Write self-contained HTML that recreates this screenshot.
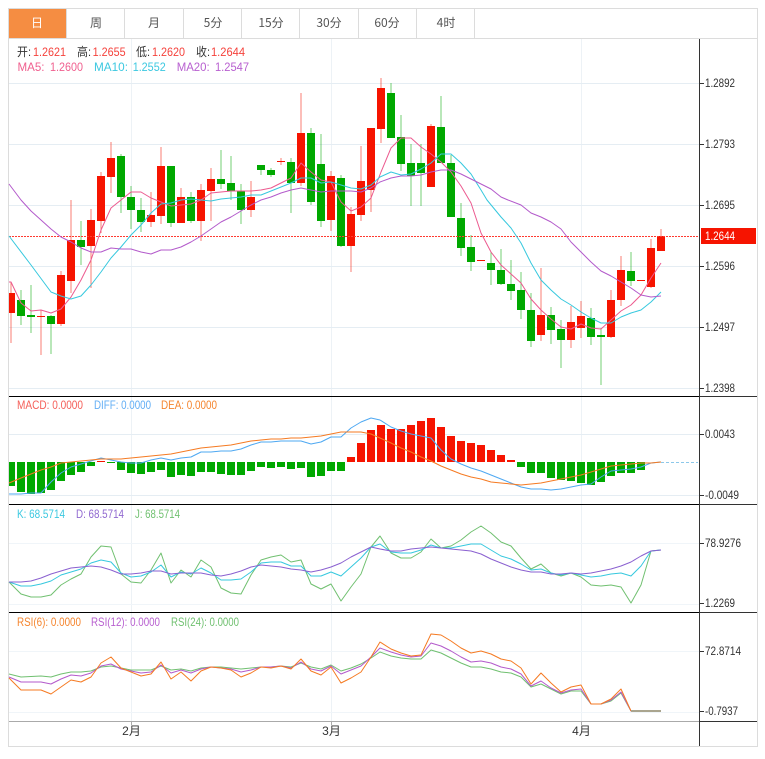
<!DOCTYPE html>
<html>
<head>
<meta charset="utf-8">
<style>
html,body{margin:0;padding:0;background:#fff;width:765px;height:759px;overflow:hidden}
svg{display:block}
text{font-family:"Liberation Sans","Noto Sans CJK SC",sans-serif;font-size:12px}
.t text{font-family:"Noto Sans CJK SC","Liberation Sans",sans-serif;font-size:12px;fill:#555;text-anchor:middle}
.a text{fill:#333;font-size:12px}
.c{shape-rendering:crispEdges}
polyline{fill:none;stroke-width:1;stroke-linejoin:round}
</style>
</head>
<body>
<svg width="765" height="759" viewBox="0 0 765 759" xmlns="http://www.w3.org/2000/svg">
<defs><clipPath id="cp"><rect x="9" y="39" width="690" height="682"/></clipPath></defs>
<!-- frame and tabs -->
<g class="c">
<rect x="9" y="9" width="57" height="29" fill="#f58d42"/>
<path d="M8.5 8.5H757.5V746.5H8.5ZM9 38.5H757M66.5 9V38M124.5 9V38M183.5 9V38M241.5 9V38M299.5 9V38M358.5 9V38M416.5 9V38M474.5 9V38" fill="none" stroke="#dcdcdc"/>
<!-- grid -->
<path d="M131.5 39V721M331.5 39V721M581.5 39V721" stroke="#edf2f6" fill="none"/>
<path d="M9 83.5H699M9 144.5H699M9 205.5H699M9 266.5H699M9 327.5H699M9 388.5H699M9 434.5H699M9 495.5H699" stroke="#e5edf3" fill="none"/>
<path d="M9 543.5H699M9 604.5H699M9 651.5H699M9 712.5H699" stroke="#f0f5f9" fill="none"/>
<path d="M9 396.5H699M9 504.5H699M9 612.5H699" stroke="#000" fill="none"/>
<path d="M9 721.5H699M131.5 721V725M331.5 721V725M581.5 721V725" stroke="#aaa" fill="none"/>
<path d="M699.5 39V746M699 396.5H757M699 504.5H757M699 612.5H757M699 721.5H757" stroke="#333" fill="none"/>
<path d="M700 83.5H704M700 144.5H704M700 205.5H704M700 266.5H704M700 327.5H704M700 388.5H704M700 434.5H704M700 495.5H704M700 543.5H704M700 603.5H704M700 651.5H704M700 711.5H704" stroke="#333" fill="none"/>
</g>
<!-- tabs text -->
<g class="t">
<text x="37" y="27" style="fill:#fff">日</text>
<text x="96" y="27">周</text>
<text x="154" y="27">月</text>
<text x="213" y="27">5分</text>
<text x="271" y="27">15分</text>
<text x="329" y="27">30分</text>
<text x="387" y="27">60分</text>
<text x="446" y="27">4时</text>
</g>
<!-- candles -->
<g clip-path="url(#cp)">
<path fill="none" stroke="#f61400" stroke-opacity=".55" d="M11 282V343M41 310V355M61 271V326M71 200V293M91 209V288M101 172V233M111 142V193M151 192V227M161 147V224M181 188V223M201 184V241M211 168V221M251 181V217M281 158V165M301 93V186M331 171V231M351 207V272M361 146V221M371 128V212M381 78V143M431 124V187M541 268V341M571 306V348M581 301V338M611 290V338M621 256V306M651 239V288M661 229V251"/>
<path fill="none" stroke="#00a800" stroke-opacity=".55" d="M21 290V325M31 285V333M51 315V354M81 221V265M121 154V213M131 186V229M141 198V232M171 166V227M191 192V223M221 150V189M231 156V200M241 184V224M261 165V175M271 168V177M291 158V213M311 128V205M321 134V227M341 175V247M391 83V138M401 115V171M411 144V206M421 144V206M441 96V163M451 155V217M461 203V256M471 235V271M491 252V285M501 249V285M511 260V300M521 272V319M531 293V347M551 307V344M561 320V368M591 308V345M601 328V385M631 252V286"/>
<path class="c" fill="none" stroke="#f61400" stroke-width="8" d="M11 293V313M41 316V317M61 275V324M71 240V281M91 220V246M101 176V221M111 158V177M151 215V222M161 166V216M181 197V223M201 190V221M211 179V191M251 197V210M281 161V162M301 133V183M331 176V220M351 214V246M361 181V215M371 128V190M381 88V129M431 126V187M481 260V261M541 315V335M571 322V340M581 316V328M611 300V337M621 270V300M641 280V281M651 248V287M661 236V251"/>
<path class="c" fill="none" stroke="#00a800" stroke-width="8" d="M21 300V316M31 315V317M51 316V324M81 240V247M121 156V197M131 197V210M141 210V222M171 166V223M191 197V221M221 179V184M231 183V191M241 191V210M261 165V170M271 170V175M291 162V183M311 133V202M321 164V221M341 178V246M391 93V138M401 137V164M411 163V176M421 163V173M441 127V163M451 163V217M461 218V248M471 247V262M491 263V270M501 270V284M511 284V291M521 290V310M531 310V341M551 315V330M561 329V340M591 318V337M601 335V337M631 271V281"/>
<!-- price line -->
<path class="c" d="M9 236.5H699" stroke="#ff3a30" stroke-dasharray="2 1" fill="none"/>
<!-- MACD bars -->
<path class="c" fill="none" stroke="#f61400" stroke-width="8" d="M101 461V462M351 457V462M361 443V462M371 430V462M381 425V462M391 429V462M401 429V462M411 425V462M421 421V462M431 418V462M441 427V462M451 436V462M461 441V462M471 443V462M481 445V462M491 450V462M501 455V462M511 460V462"/>
<path class="c" fill="none" stroke="#00a800" stroke-width="8" d="M11 462V486M21 462V492M31 462V494M41 462V493M51 462V490M61 462V481M71 462V475M81 462V472M91 462V466M111 462V463M121 462V470M131 462V473M141 462V474M151 462V472M161 462V470M171 462V477M181 462V475M191 462V476M201 462V472M211 462V472M221 462V474M231 462V475M241 462V475M251 462V471M261 462V467M271 462V468M281 462V467M291 462V469M301 462V468M311 462V477M321 462V476M331 462V471M341 462V471M521 462V467M531 462V473M541 462V473M551 462V478M561 462V480M571 462V481M581 462V483M591 462V485M601 462V482M611 462V476M621 462V473M631 462V473M641 462V470"/>
</g>
<!-- MA lines -->
<polyline stroke="#ec5a8f" points="9,282 11,282 21,303 31,311 41,310 51,313 61,309 71,297 81,280 91,260 101,230 111,208 121,200 131,192 141,192 151,198 161,202 171,206 181,205 191,204 201,200 211,193 221,192 231,191 241,191 251,191 261,190 271,188 281,183 291,178 301,163 311,172 321,180 331,182 341,202 351,211 361,207 371,198 381,172 391,148 401,138 411,138 421,147 431,154 441,162 451,172 461,186 471,203 481,233 491,252 501,265 511,274 521,283 531,299 541,310 551,319 561,327 571,329 581,324 591,328 601,329 611,320 621,311 631,305 641,295 651,278 661,263"/>
<polyline stroke="#36c8de" points="9,236 31,265 51,292 61,296 71,299 81,296 91,285 101,272 111,258 121,247 131,235 141,225 151,213 161,204 171,203 181,200 191,199 201,200 211,201 221,199 231,198 241,197 251,195 261,195 271,191 281,187 291,183 301,178 311,178 321,183 331,182 341,185 351,188 361,189 371,185 380,177 391,172 401,175 411,174 421,169 431,163 441,154 451,154 461,163 471,174 481,190 487,200 501,217 511,228 521,243 531,263 541,280 551,290 561,299 571,305 581,312 591,318 601,323 611,323 621,317 631,313 641,310 651,302 661,292"/>
<polyline stroke="#b35acb" points="9,184 21,200 31,211 41,220 51,229 61,237 71,242 81,248 91,252 101,252 111,248 121,249 131,249 141,252 151,254 161,250 171,250 181,247 191,242 201,236 211,229 221,222 231,217 241,211 251,205 261,200 271,197 281,193 291,190 301,188 311,190 321,192 331,191 341,191 351,191 361,192 371,188 380,182 391,178 401,176 411,176 421,175 431,172 441,170 451,170 461,174 471,179 481,184 491,189 501,197 508,200 521,205 531,213 541,217 551,222 561,229 571,242 581,252 591,262 601,271 611,276 621,282 631,288 641,295 651,297 661,296"/>
<path d="M661 462.5H698" stroke="#8cc8ea" stroke-dasharray="3 2" fill="none"/>
<polyline stroke="#4ea8f2" points="9,494 21,494 31,493 41,493 51,482 61,473 71,467 81,464 91,461 101,458 111,460 121,462 131,463 141,463 151,460 161,458 171,460 181,458 191,457 201,452 211,452 221,451 231,451 241,449 251,445 261,442 271,442 281,441 291,441 301,441 311,444 321,442 331,437 341,437 351,428 361,422 371,418 380,420 391,427 401,431 411,434 421,436 431,438 441,450 451,459 461,464 471,468 481,471 491,475 501,479 511,483 521,487 531,489 541,489 551,490 561,489 571,487 581,485 591,484 601,477 611,471 621,470 631,469 641,467 651,463 661,462"/>
<polyline stroke="#f57a22" points="9,483 21,478 31,474 41,470 51,467 61,463 71,462 81,461 91,460 101,459 111,459 121,459 131,458 141,457 151,456 161,455 171,454 181,452 191,450 201,448 211,447 221,446 231,445 241,443 251,441 261,440 271,439 281,439 291,438 301,438 311,437 321,436 331,434 341,432 351,432 361,432 371,434 380,438 391,443 401,448 411,452 421,457 431,461 441,466 451,470 461,474 471,477 481,479 491,482 501,483 511,484 521,485 531,484 541,483 551,481 561,479 571,477 581,475 591,472 601,469 611,466 621,465 631,464 641,463 651,463 661,462"/>
<!-- KDJ -->
<polyline stroke="#70c070" points="9,582 21,594 31,597 41,597 51,595 61,585 71,579 81,574 91,557 101,546 111,547 121,574 131,582 141,583 151,570 161,553 171,583 181,570 191,577 201,560 211,567 221,588 231,593 241,594 251,575 261,560 271,557 281,555 291,562 301,560 311,584 321,589 331,584 341,601 351,587 361,574 371,547 380,536 391,553 401,558 411,558 421,552 431,539 441,548 451,546 461,540 471,532 481,526 491,533 501,542 511,546 521,558 531,569 541,564 551,573 561,576 571,573 581,577 591,585 601,586 611,585 621,587 631,603 641,585 651,551 661,550"/>
<polyline stroke="#36c8de" points="9,582 21,586 31,586 41,584 51,581 61,575 71,572 81,569 91,563 101,560 111,562 121,573 131,577 141,576 151,572 161,565 171,577 181,572 191,574 201,568 211,573 221,580 231,580 241,579 251,572 261,563 271,562 281,562 291,566 301,566 311,576 321,576 331,572 341,576 351,567 361,558 371,547 380,544 391,552 401,553 411,553 421,550 431,545 441,548 451,548 461,546 471,544 481,544 491,550 501,556 511,559 521,564 531,570 541,569 551,573 561,575 571,573 581,575 591,577 601,576 611,574 621,573 631,576 641,566 651,551 661,550"/>
<polyline stroke="#8a60d0" points="9,582 21,582 31,581 41,578 51,574 61,571 71,568 81,567 91,566 101,567 111,570 121,574 131,574 141,573 151,571 161,571 171,574 181,573 191,573 201,573 211,575 221,576 231,574 241,571 251,567 261,565 271,566 281,567 291,569 301,570 311,572 321,570 331,567 341,563 351,557 361,552 371,547 380,549 391,551 401,551 411,549 421,548 431,547 441,548 451,549 461,550 471,551 481,554 491,559 501,563 511,567 521,570 531,572 541,572 551,574 561,574 571,573 581,574 591,573 601,571 611,569 621,566 631,562 641,556 651,551 661,550"/>
<!-- RSI -->
<polyline stroke="#70c070" points="9,674 21,677 41,676 51,677 61,674 71,672 81,672 91,671 101,667 111,666 121,668 131,670 141,670 151,670 161,666 171,670 181,669 191,671 201,668 211,667 221,667 231,668 241,669 251,668 261,667 271,667 281,666 291,667 301,663 311,667 321,669 331,665 341,671 351,668 361,664 371,658 380,652 391,656 401,658 411,659 421,659 431,650 441,653 451,658 461,663 471,667 481,667 491,669 501,672 511,673 521,677 531,687 541,684 551,689 561,694 571,691 581,691 591,704 601,704 611,701 621,693 631,711 661,711"/>
<polyline stroke="#b35acb" points="9,677 21,682 41,682 51,684 61,679 71,675 81,676 91,673 101,666 111,664 121,669 131,671 141,673 151,672 161,665 171,673 181,670 191,673 201,669 211,667 221,668 231,669 241,672 251,670 261,667 271,667 281,666 291,668 301,662 311,669 321,671 331,666 341,674 351,670 361,666 371,657 380,648 391,652 401,655 411,657 421,656 431,643 441,646 451,651 461,657 471,662 481,661 491,663 501,667 511,669 521,674 531,686 541,681 551,688 561,693 571,690 581,689 591,704 601,704 611,700 621,692 631,711 661,711"/>
<polyline stroke="#f57a22" points="9,678 21,690 31,690 41,690 51,694 61,687 71,680 81,682 91,677 101,663 111,657 121,668 131,672 141,676 151,674 161,662 171,679 181,672 191,681 201,671 211,667 221,668 231,670 241,677 251,673 261,667 271,668 281,666 291,669 301,659 311,671 321,675 331,667 341,683 351,678 361,672 371,657 380,642 391,649 401,653 411,656 421,655 431,634 441,635 451,641 461,648 471,653 481,651 491,654 501,659 511,661 521,668 531,684 541,673 551,683 561,692 571,687 581,685 591,704 601,704 611,699 621,689 631,711"/>
<path d="M631 711H661" stroke="#aaa58f" stroke-width="2" fill="none"/>
<!-- price tag -->
<rect x="701" y="228" width="55" height="16" fill="#f61400" class="c"/>
<text x="705" y="240" fill="#fff" textLength="30" lengthAdjust="spacingAndGlyphs">1.2644</text>
<!-- axis labels -->
<g class="a">
<text x="705" y="87" textLength="30" lengthAdjust="spacingAndGlyphs">1.2892</text>
<text x="705" y="148" textLength="30" lengthAdjust="spacingAndGlyphs">1.2793</text>
<text x="705" y="209" textLength="30" lengthAdjust="spacingAndGlyphs">1.2695</text>
<text x="705" y="270" textLength="30" lengthAdjust="spacingAndGlyphs">1.2596</text>
<text x="705" y="331" textLength="30" lengthAdjust="spacingAndGlyphs">1.2497</text>
<text x="705" y="392" textLength="30" lengthAdjust="spacingAndGlyphs">1.2398</text>
<text x="705" y="438" textLength="30" lengthAdjust="spacingAndGlyphs">0.0043</text>
<text x="705" y="499" textLength="34" lengthAdjust="spacingAndGlyphs">-0.0049</text>
<text x="705" y="547" textLength="36" lengthAdjust="spacingAndGlyphs">78.9276</text>
<text x="705" y="607" textLength="30" lengthAdjust="spacingAndGlyphs">1.2269</text>
<text x="705" y="655" textLength="36" lengthAdjust="spacingAndGlyphs">72.8714</text>
<text x="705" y="715" textLength="33" lengthAdjust="spacingAndGlyphs">-0.7937</text>
<text x="131.5" y="735" text-anchor="middle">2月</text>
<text x="331.5" y="735" text-anchor="middle">3月</text>
<text x="581.5" y="735" text-anchor="middle">4月</text>
</g>
<!-- legend -->
<text x="17" y="56" fill="#333" textLength="14" lengthAdjust="spacingAndGlyphs">开:</text>
<text x="33" y="56" fill="#f5423c" textLength="33" lengthAdjust="spacingAndGlyphs">1.2621</text>
<text x="77" y="56" fill="#333" textLength="14" lengthAdjust="spacingAndGlyphs">高:</text>
<text x="92.6" y="56" fill="#f5423c" textLength="33" lengthAdjust="spacingAndGlyphs">1.2655</text>
<text x="136" y="56" fill="#333" textLength="14" lengthAdjust="spacingAndGlyphs">低:</text>
<text x="152" y="56" fill="#f5423c" textLength="33" lengthAdjust="spacingAndGlyphs">1.2620</text>
<text x="196" y="56" fill="#333" textLength="14" lengthAdjust="spacingAndGlyphs">收:</text>
<text x="211" y="56" fill="#f5423c" textLength="34" lengthAdjust="spacingAndGlyphs">1.2644</text>
<text x="17.5" y="71" fill="#f0608f" textLength="27" lengthAdjust="spacingAndGlyphs">MA5:</text>
<text x="50" y="71" fill="#f0608f" textLength="33" lengthAdjust="spacingAndGlyphs">1.2600</text>
<text x="94" y="71" fill="#3cc8e0" textLength="34" lengthAdjust="spacingAndGlyphs">MA10:</text>
<text x="132.7" y="71" fill="#3cc8e0" textLength="33" lengthAdjust="spacingAndGlyphs">1.2552</text>
<text x="176.7" y="71" fill="#b860d0" textLength="33" lengthAdjust="spacingAndGlyphs">MA20:</text>
<text x="215" y="71" fill="#b860d0" textLength="34" lengthAdjust="spacingAndGlyphs">1.2547</text>
<text x="17" y="409" fill="#f5605a" textLength="66" lengthAdjust="spacingAndGlyphs">MACD: 0.0000</text>
<text x="94" y="409" fill="#62aef5" textLength="57" lengthAdjust="spacingAndGlyphs">DIFF: 0.0000</text>
<text x="161" y="409" fill="#f5852e" textLength="56" lengthAdjust="spacingAndGlyphs">DEA: 0.0000</text>
<text x="17" y="518" fill="#3cc8e0" textLength="48" lengthAdjust="spacingAndGlyphs">K: 68.5714</text>
<text x="76" y="518" fill="#9068d0" textLength="48" lengthAdjust="spacingAndGlyphs">D: 68.5714</text>
<text x="135" y="518" fill="#70c070" textLength="45" lengthAdjust="spacingAndGlyphs">J: 68.5714</text>
<text x="17" y="626" fill="#f5852e" textLength="64" lengthAdjust="spacingAndGlyphs">RSI(6): 0.0000</text>
<text x="91" y="626" fill="#b860d0" textLength="69" lengthAdjust="spacingAndGlyphs">RSI(12): 0.0000</text>
<text x="171" y="626" fill="#70c070" textLength="68" lengthAdjust="spacingAndGlyphs">RSI(24): 0.0000</text>
</svg>
</body>
</html>
